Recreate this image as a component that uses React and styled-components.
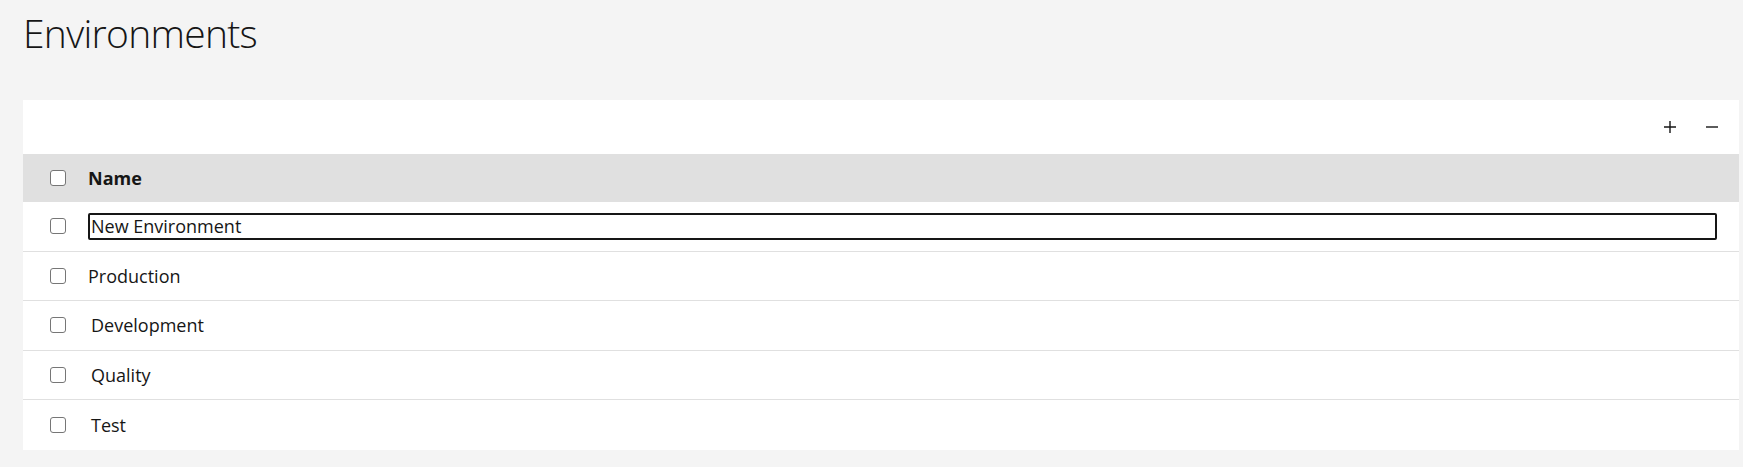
import { useState } from "react";
import styled, { createGlobalStyle } from "styled-components";

const GlobalStyle = createGlobalStyle`
    body {
        margin: 0;
        background: #f4f4f4;
        font-family: "Open Sans", "Noto Sans", sans-serif;
        color: #161616;
    }
`;

const rows = [
    { id: 1, name: "New Environment", editing: true },
    { id: 2, name: "Production" },
    { id: 3, name: "Development", indent: true },
    { id: 4, name: "Quality", indent: true },
    { id: 5, name: "Test", indent: true },
];

export default function App() {
    const [checked, setChecked] = useState({});
    const [draft, setDraft] = useState("New Environment");

    const toggle = (id) => setChecked({ ...checked, [id]: !checked[id] });

    return (
        <Page>
            <GlobalStyle />
            <Title>Environments</Title>
            <Table>
                <Toolbar>
                    <ToolButton aria-label="Add">
                        <svg width="14" height="14" viewBox="0 0 14 14">
                            <path d="M7 1v12M1 7h12" stroke="#161616" strokeWidth="1.4" />
                        </svg>
                    </ToolButton>
                    <ToolButton aria-label="Remove">
                        <svg width="14" height="14" viewBox="0 0 14 14">
                            <path d="M1 7h12" stroke="#161616" strokeWidth="1.4" />
                        </svg>
                    </ToolButton>
                </Toolbar>
                <HeaderRow>
                    <CheckCell>
                        <Checkbox type="checkbox" />
                    </CheckCell>
                    <HeaderLabel>Name</HeaderLabel>
                </HeaderRow>
                {rows.map((row) => (
                    <Row key={row.id}>
                        <CheckCell>
                            <Checkbox
                                type="checkbox"
                                checked={!!checked[row.id]}
                                onChange={() => toggle(row.id)}
                            />
                        </CheckCell>
                        {row.editing ? (
                            <NameInput
                                value={draft}
                                onChange={(e) => setDraft(e.target.value)}
                            />
                        ) : (
                            <NameText $indent={row.indent}>{row.name}</NameText>
                        )}
                    </Row>
                ))}
            </Table>
        </Page>
    );
}

const Page = styled.div`
    padding: 10px 4px 18px 23px;
`;

const Title = styled.h1`
    margin: 0 0 44px;
    font-size: 39px;
    font-weight: 300;
    line-height: 46px;
    letter-spacing: -0.7px;
`;

const Table = styled.div`
    background: #fff;
    display: flex;
    flex-direction: column;
`;

const Toolbar = styled.div`
    height: 54px;
    display: flex;
    justify-content: flex-end;
    align-items: center;
    gap: 14px;
    padding-right: 13px;
    box-sizing: border-box;
`;

const ToolButton = styled.button`
    border: none;
    background: none;
    padding: 0;
    width: 28px;
    height: 28px;
    display: flex;
    align-items: center;
    justify-content: center;
    cursor: pointer;
`;

const HeaderRow = styled.div`
    height: 48px;
    background: #e0e0e0;
    display: flex;
    align-items: center;
`;

const Row = styled.div`
    height: 49.5px;
    box-sizing: border-box;
    display: flex;
    align-items: center;
    padding-right: 22px;
    border-bottom: 1px solid #e0e0e0;

    &:last-child {
        border-bottom: none;
    }
`;

const CheckCell = styled.div`
    width: 65px;
    display: flex;
    align-items: center;
    padding-left: 27px;
    box-sizing: border-box;
`;

const Checkbox = styled.input`
    appearance: none;
    margin: 0;
    width: 16px;
    height: 16px;
    border: 1.5px solid #767676;
    border-radius: 3px;
    background: #fff;
    box-sizing: border-box;
    cursor: pointer;

    &:checked {
        background: #161616;
        border-color: #161616;
    }
`;

const HeaderLabel = styled.span`
    font-size: 18px;
    font-weight: 700;
`;

const NameText = styled.span`
    font-size: 18px;
    padding-left: ${(p) => (p.$indent ? "3px" : "0")};
`;

const NameInput = styled.input`
    flex: 1;
    height: 27px;
    box-sizing: border-box;
    border: 2px solid #161616;
    border-radius: 2px;
    padding: 0 1px;
    font-family: inherit;
    font-size: 18px;
    color: #161616;
    outline: none;
`;
